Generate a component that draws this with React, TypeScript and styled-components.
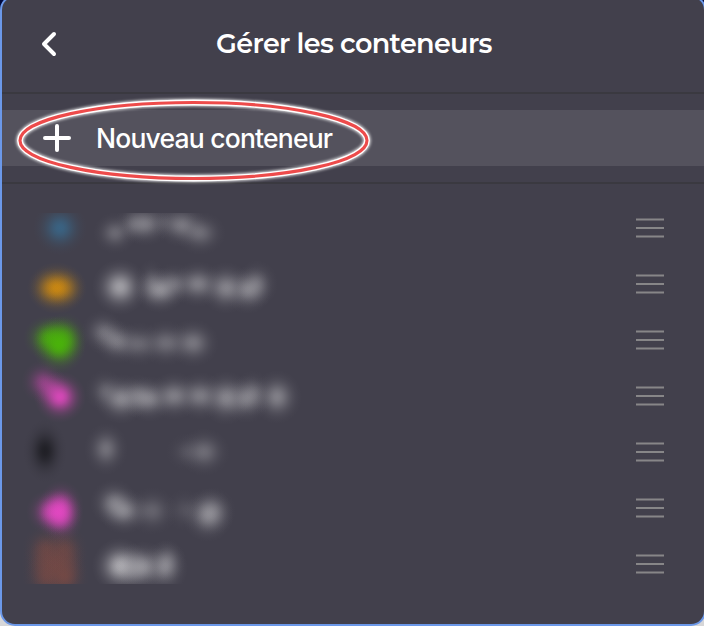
import React from 'react';
import styled, { createGlobalStyle } from 'styled-components';

const GlobalStyle = createGlobalStyle`
  html, body { margin: 0; height: 100%; overflow: hidden; }
  body { background: linear-gradient(#02093c 0 300px, #d6d6d8 300px); }
  #root { height: 626px; width: 704px; overflow: hidden; }
  * { box-sizing: border-box; }
`;

const Panel = styled.main`
  width: 706px;
  height: 631px;
  margin-top: -5px;
  padding-top: 3px;
  border: 2px solid #6b98e9;
  border-radius: 15px;
  background: #42404c;
  color: #fff;
  overflow: hidden;
`;

const Header = styled.header`
  height: 92px;
  display: grid;
  grid-template-columns: 94px 516px 94px;
  align-items: center;
  padding-bottom: 5px;
`;

const BackButton = styled.button`
  width: 32px;
  height: 32px;
  margin-left: 30px;
  padding: 0;
  border: 0;
  background: none;
  color: inherit;
  svg { display: block; }
`;

const Title = styled.h1`
  margin: 1px 0 0;
  font: 600 27px/34px Montserrat, Metropolis, Lato, sans-serif;
  letter-spacing: -0.63px;
  text-align: center;
  white-space: nowrap;
`;

const CreateSection = styled.section`
  position: relative;
  height: 92px;
  padding: 16px 0;
  border-top: 2px solid #3a3940;
  border-bottom: 2px solid #3a3940;
`;

const CreateButton = styled.button`
  width: 100%;
  height: 56px;
  display: flex;
  align-items: center;
  gap: 24px;
  padding: 0 0 0 40px;
  border: 0;
  background: #54525d;
  color: inherit;
  font: 450 26.5px/32px Inter, sans-serif;
  letter-spacing: -0.8px;
  white-space: nowrap;
`;

const Highlight = styled.svg`
  position: absolute;
  left: 8px;
  top: -4px;
  overflow: visible;
  pointer-events: none;
`;

const List = styled.ul`
  margin: 0;
  padding: 16px 0 0;
  list-style: none;
`;

const Row = styled.li`
  height: 56px;
  display: flex;
  justify-content: space-between;
  padding: 0 40px 0 22px;
`;

const Redacted = styled.svg<{ $clip?: string }>`
  overflow: visible;
  clip-path: ${(p) => p.$clip ?? 'none'};
`;

type Blob = [x: number, y: number, rx: number, ry: number, opacity: number];
interface Container {
  color: string;
  icon: Blob[];
  label: Blob[];
  clip?: string;
}

const LABEL_COLOR = '#bfbec2';

const containers: Container[] = [
  {
    color: '#386c91', clip: 'inset(13px -20px -20px -20px)',
    icon: [[60, 28, 27, 27, 0.78]],
    label: [[115, 33, 22, 21, 0.32], [134, 24, 20, 20, 0.28], [146, 24, 25, 22, 0.42], [164, 22, 18, 18, 0.12], [181, 25, 26, 22, 0.42], [200, 33, 26, 22, 0.34]],
  },
  {
    color: '#d88f0c',
    icon: [[57, 32, 30, 26, 0.85], [50, 32, 21, 21, 0.25], [65, 32, 21, 21, 0.25]],
    label: [[120, 31, 28, 28, 0.74], [151, 27, 16, 24, 0.22], [160, 34, 26, 23, 0.58], [174, 28, 24, 21, 0.32], [198, 28, 26, 23, 0.48], [226, 32, 26, 26, 0.52], [248, 34, 24, 24, 0.48], [257, 28, 21, 24, 0.32]],
  },
  {
    color: '#4ab608',
    icon: [[48, 26, 25, 23, 0.65], [56, 27, 24, 24, 0.4], [65, 27, 23, 27, 0.55], [59, 33, 27, 29, 0.9]],
    label: [[103, 20, 22, 22, 0.32], [112, 25, 19, 19, 0.15], [118, 30, 25, 22, 0.38], [139, 32, 26, 22, 0.3], [166, 31, 27, 23, 0.35], [193, 31, 26, 24, 0.42]],
  },
  {
    color: '#db48bb',
    icon: [[43, 14, 22, 22, 0.42], [52, 22, 21, 20, 0.4], [60, 29, 26, 26, 0.95]],
    label: [[105, 23, 20, 22, 0.24], [121, 31, 27, 25, 0.54], [138, 28, 22, 22, 0.32], [149, 31, 26, 23, 0.48], [174, 28, 26, 24, 0.48], [200, 28, 26, 24, 0.46], [226, 30, 26, 27, 0.52], [246, 31, 25, 24, 0.42], [253, 25, 20, 23, 0.27], [277, 29, 25, 27, 0.5]],
  },
  {
    color: '#19191e',
    icon: [[45, 27, 22, 32, 0.82]],
    label: [[106, 25, 22, 26, 0.38], [186, 28, 21, 20, 0.12], [204, 28, 26, 24, 0.34]],
  },
  {
    color: '#f248cd',
    icon: [[50, 32, 24, 23, 0.5], [58, 32, 24, 24, 0.5], [61, 27, 23, 27, 0.55], [61, 37, 23, 27, 0.55]],
    label: [[114, 23, 24, 24, 0.42], [124, 31, 26, 23, 0.5], [152, 31, 26, 24, 0.27], [185, 30, 22, 22, 0.13], [208, 35, 26, 27, 0.5], [213, 31, 23, 24, 0.26]],
  },
  {
    color: '#7a4a44', clip: 'inset(-20px -20px 8px -20px)',
    icon: [[45, 13, 23, 25, 0.55], [65, 13, 23, 25, 0.55], [45, 27, 24, 26, 0.45], [65, 27, 24, 26, 0.45], [55, 28, 28, 36, 0.55], [46, 41, 24, 26, 0.6], [65, 41, 24, 26, 0.75]],
    label: [[120, 30, 28, 28, 0.8], [132, 32, 24, 25, 0.28], [143, 31, 27, 26, 0.57], [165, 31, 23, 27, 0.5], [168, 24, 18, 22, 0.18]],
  },
];

// Gaussian falloff, sampled from the centre outwards
const FALLOFF = [1, 0.94, 0.78, 0.57, 0.37, 0.21, 0.1, 0.035, 0];

const Blobs = ({ items, fill, id }: { items: Blob[]; fill: string; id: string }) => (
  <g>
    <radialGradient id={id}>
      {FALLOFF.map((a, i) => (
        <stop key={i} offset={i / (FALLOFF.length - 1)} stopColor={fill} stopOpacity={a} />
      ))}
    </radialGradient>
    {items.map(([x, y, rx, ry, opacity], i) => (
      <ellipse key={i} cx={x} cy={y} rx={rx} ry={ry} opacity={opacity} fill={`url(#${id})`} />
    ))}
  </g>
);

const DragHandle = () => (
  <svg width="28" height="56" viewBox="0 0 28 56" stroke="#878688" strokeWidth="2">
    <path d="M0 19.5H28M0 28H28M0 36.5H28" />
  </svg>
);

export default function App() {
  return (
    <>
      <GlobalStyle />
      <Panel>
        <Header>
          <BackButton aria-label="Retour">
            <svg width="32" height="32" viewBox="0 0 32 32" fill="none" stroke="currentColor" strokeWidth="4" strokeLinecap="round" strokeLinejoin="round">
              <path d="M22 6 12 16 22 26" />
            </svg>
          </BackButton>
          <Title>Gérer les conteneurs</Title>
        </Header>
        <CreateSection>
          <CreateButton>
            <svg width="30" height="30" viewBox="0 0 30 30" stroke="currentColor" strokeWidth="4" strokeLinecap="round">
              <path d="M15 3V27M3 15H27" />
            </svg>
            Nouveau conteneur
          </CreateButton>
          <Highlight width="370" height="100" viewBox="10 90 370 100" fill="none">
            <filter id="glow" x="-10%" y="-20%" width="120%" height="140%">
              <feGaussianBlur stdDeviation="1.8" />
            </filter>
            <ellipse cx="193.5" cy="140.5" rx="173.5" ry="38" stroke="#fff" strokeWidth="7.4" opacity=".85" filter="url(#glow)" />
            <ellipse cx="193.5" cy="140.5" rx="173.5" ry="38" stroke="#fff" strokeWidth="5.8" />
            <ellipse cx="193.5" cy="140.5" rx="173.5" ry="38" stroke="#ed4b4b" strokeWidth="3.1" />
          </Highlight>
        </CreateSection>
        <List>
          {containers.map((c, i) => (
            <Row key={i}>
              <Redacted $clip={c.clip} width="300" height="56" viewBox="24 0 300 56">
                <Blobs items={c.icon} fill={c.color} id={`icon-${i}`} />
                <Blobs items={c.label} fill={LABEL_COLOR} id={`label-${i}`} />
              </Redacted>
              <DragHandle />
            </Row>
          ))}
        </List>
      </Panel>
    </>
  );
}
